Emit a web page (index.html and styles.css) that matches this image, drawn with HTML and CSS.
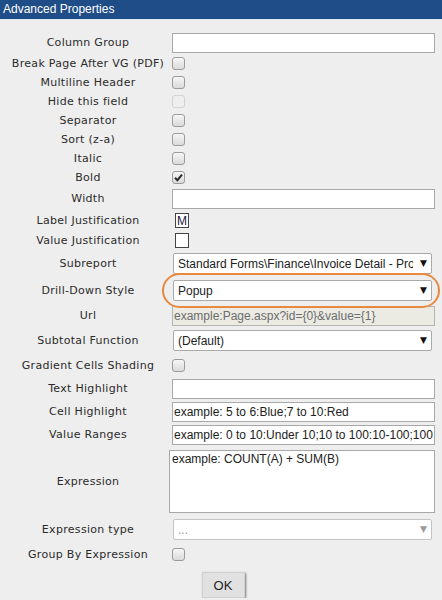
FILE: index.html
```html
<!DOCTYPE html>
<html lang="en">
<head>
  <meta charset="UTF-8">
  <meta name="viewport" content="width=device-width, initial-scale=1.0">
  <title>Advanced Properties</title>
  <link rel="stylesheet" href="styles.css">
</head>
<body>
  <div class="title-bar">Advanced Properties</div>
  <form class="props" onsubmit="return false;">
    <div class="row field">
      <label for="colGroup">Column Group</label>
      <input id="colGroup" type="text">
    </div>
    <div class="row">
      <label>Break Page After VG (PDF)</label>
      <span class="box"></span>
    </div>
    <div class="row">
      <label>Multiline Header</label>
      <span class="box"></span>
    </div>
    <div class="row">
      <label>Hide this field</label>
      <span class="box off"></span>
    </div>
    <div class="row">
      <label>Separator</label>
      <span class="box"></span>
    </div>
    <div class="row">
      <label>Sort (z-a)</label>
      <span class="box"></span>
    </div>
    <div class="row">
      <label>Italic</label>
      <span class="box"></span>
    </div>
    <div class="row">
      <label>Bold</label>
      <span class="box">
        <svg width="11" height="11" viewBox="0 0 11 11"><path d="M2 5.8 L4.4 8.2 L9 2.6" fill="none" stroke="#2a2a2a" stroke-width="2"/></svg>
      </span>
    </div>
    <div class="row field">
      <label for="width">Width</label>
      <input id="width" type="text">
    </div>
    <div class="row tall">
      <label>Label Justification</label>
      <span class="just">M</span>
    </div>
    <div class="row">
      <label>Value Justification</label>
      <span class="just"></span>
    </div>
    <div class="row pick">
      <label for="subreport">Subreport</label>
      <div class="pick-box">
        <select id="subreport"><option>Standard Forms\Finance\Invoice Detail - Product</option></select>
      </div>
    </div>
    <div class="row pick ringed">
      <label for="drill">Drill-Down Style</label>
      <div class="pick-box">
        <select id="drill"><option>Popup</option><option>Inline</option></select>
      </div>
    </div>
    <div class="row field">
      <label for="url">Url</label>
      <input id="url" type="text" value="example:Page.aspx?id={0}&amp;value={1}" disabled>
    </div>
    <div class="row pick">
      <label for="subtotal">Subtotal Function</label>
      <div class="pick-box">
        <select id="subtotal"><option>(Default)</option></select>
      </div>
    </div>
    <div class="row field">
      <label>Gradient Cells Shading</label>
      <span class="box"></span>
    </div>
    <div class="row field">
      <label for="textHl">Text Highlight</label>
      <input id="textHl" type="text">
    </div>
    <div class="row field">
      <label for="cellHl">Cell Highlight</label>
      <input id="cellHl" type="text" value="example: 5 to 6:Blue;7 to 10:Red">
    </div>
    <div class="row field">
      <label for="ranges">Value Ranges</label>
      <input id="ranges" type="text" value="example: 0 to 10:Under 10;10 to 100:10-100;100 to 1000:Over 100">
    </div>
    <div class="row area">
      <label for="expr">Expression</label>
      <textarea id="expr">example: COUNT(A) + SUM(B)</textarea>
    </div>
    <div class="row pick">
      <label for="exprType">Expression type</label>
      <div class="pick-box muted">
        <select id="exprType"><option>...</option></select>
      </div>
    </div>
    <div class="row field">
      <label>Group By Expression</label>
      <span class="box"></span>
    </div>
    <div class="actions">
      <button type="button">OK</button>
    </div>
  </form>
</body>
</html>
```

FILE: styles.css
```css
body { margin: 0; background: #eeeeee; font-family: "DejaVu Sans", Verdana, sans-serif; font-size: 11px; color: #2b2b2b; }

.title-bar { height: 19px; line-height: 19px; padding-left: 3px; background: #1f4d87; color: #fff; font-family: "Liberation Sans", Arial, sans-serif; font-size: 12px; border-bottom: 1px solid #dfe6ef; }

.props { padding: 11px 7px 0 4px; }
.row { display: grid; grid-template-columns: 168px 1fr; align-items: center; height: 19px; }
.row.tall { height: 21px; }
.row.field { height: 23px; }
.row.pick { height: 27px; }
.row.area { height: 70px; }
.row label { text-align: center; white-space: nowrap; letter-spacing: 0.3px; }

input[type=text], select, textarea { font-family: "Liberation Sans", Arial, sans-serif; font-size: 12px; color: #222; box-sizing: border-box; border: 1px solid #a9a9a9; background: #fff; outline: none; }
input[type=text] { width: 100%; height: 20px; padding: 0 1px; }
input[type=text]:disabled { background: #ebebe4; color: #6d6d6d; border-color: #b5b5b0; }
textarea { width: calc(100% + 3px); margin-left: -3px; height: 63px; padding: 1px 2px; resize: none; overflow: hidden; }

.pick-box { position: relative; margin: 0 3px 0 1px; }
.pick-box select { width: 100%; height: 21px; padding: 0 18px 0 4px; border-radius: 2px; -webkit-appearance: none; appearance: none; }
.pick-box::after { content: "\25BC"; position: absolute; right: 5px; top: 5px; font-size: 9px; line-height: 10px; color: #111; pointer-events: none; }
.pick-box.muted select { color: #999; border-color: #c4c4c4; }
.pick-box.muted::after { color: #9a9a9a; }

.box { display: flex; align-items: center; justify-content: center; width: 11px; height: 11px; border: 1px solid #9c9c9c; border-radius: 3px; background: linear-gradient(#f6f6f6, #dadada); }
.box.off { border-color: #d2d2d2; background: #efefef; }

.just { display: flex; align-items: flex-end; justify-content: center; width: 12px; height: 13px; margin-left: 3px; border: 1px solid #444; background: #fff; font-family: "Liberation Sans", Arial, sans-serif; font-size: 12px; line-height: 12px; color: #1a1a40; }

.ringed { position: relative; }
.ringed::after { content: ""; position: absolute; left: 158px; right: -5px; top: -4px; bottom: -4px; border: 2px solid #e9893f; border-radius: 18px; pointer-events: none; }

.actions { text-align: center; padding: 6px 0 0 7px; }
.actions button { width: 43px; height: 26px; font-family: "Liberation Sans", Arial, sans-serif; font-size: 13px; color: #222; background: #e1e1e1; border: 1px solid #d0d0d0; border-radius: 0; box-shadow: 1px 1px 2px #7a7a7a; }
```
